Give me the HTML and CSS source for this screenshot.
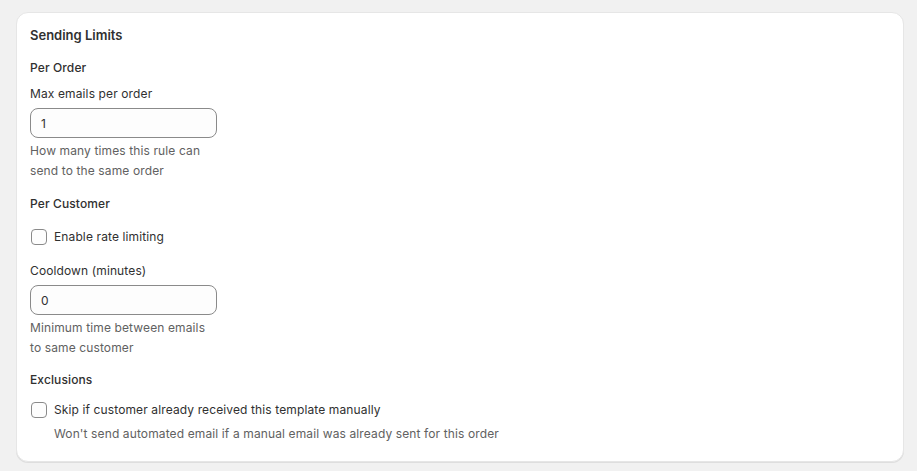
FILE: index.html
```html
<!DOCTYPE html>
<html lang="en">
<head>
  <meta charset="UTF-8">
  <meta name="viewport" content="width=device-width, initial-scale=1.0">
  <title>Sending Limits</title>
  <link rel="stylesheet" href="styles.css">
</head>
<body>

  <div class="card">
    <h2 class="card-title">Sending Limits</h2>

    <!-- Per Order -->
    <div class="section">
      <h3 class="section-title">Per Order</h3>
      <div class="field">
        <label class="field-label" for="maxEmails">Max emails per order</label>
        <input type="text" id="maxEmails" class="text-input" value="1">
        <div class="help-text">How many times this rule can send to the same order</div>
      </div>
    </div>

    <!-- Per Customer -->
    <div class="section">
      <h3 class="section-title">Per Customer</h3>
      <label class="check-row">
        <input type="checkbox" class="checkbox">
        <span>Enable rate limiting</span>
      </label>
      <div class="field field-spaced">
        <label class="field-label" for="cooldown">Cooldown (minutes)</label>
        <input type="text" id="cooldown" class="text-input" value="0">
        <div class="help-text">Minimum time between emails to same customer</div>
      </div>
    </div>

    <!-- Exclusions -->
    <div class="section section-last">
      <h3 class="section-title">Exclusions</h3>
      <label class="check-row check-row-tight">
        <input type="checkbox" class="checkbox">
        <span>Skip if customer already received this template manually</span>
      </label>
      <div class="help-text check-help">Won't send automated email if a manual email was already sent for this order</div>
    </div>
  </div>

</body>
</html>
```

FILE: styles.css
```css
body {
  margin: 0;
  padding: 12px 13px 11px 16px;
  background-color: #f1f1f1;
  font-family: Inter, "Noto Sans", sans-serif;
  font-size: 12px;
  line-height: 20px;
  letter-spacing: 0.12px;
  color: #303030;
}

.card {
  background-color: #fff;
  border: 1px solid #e6e6e6;
  border-radius: 12px;
  box-shadow: 0 1px 0 rgba(0, 0, 0, 0.08);
  padding: 12px 14px 17px 13px;
}

.card-title {
  margin: 0;
  font-size: 13px;
  font-weight: 600;
  line-height: 20px;
  letter-spacing: 0;
}

.section {
  margin-top: 13px;
}

.section-last {
  margin-top: 12px;
}

.section-title {
  margin: 0;
  font-size: 12px;
  font-weight: 500;
  line-height: 20px;
}

.section:first-of-type .section-title {
  margin-top: 1px;
}

.field {
  display: flex;
  flex-direction: column;
  width: 187px;
  margin-top: 6px;
}

.field-spaced {
  margin-top: 14px;
}

.field-label {
  display: block;
}

.text-input {
  box-sizing: border-box;
  height: 30px;
  margin-top: 4px;
  padding: 0 10px;
  font-family: inherit;
  font-size: 12px;
  letter-spacing: inherit;
  color: #303030;
  background-color: #fdfdfd;
  border: 1px solid #8a8a8a;
  border-radius: 8px;
}

.text-input:focus {
  outline: none;
  border-color: #303030;
}

.help-text {
  margin-top: 3px;
  color: #616161;
}

.check-row {
  display: flex;
  align-items: center;
  gap: 7px;
  margin-top: 13px;
  cursor: pointer;
}

.check-row-tight {
  margin-top: 10px;
}

.checkbox {
  appearance: none;
  width: 16px;
  height: 16px;
  margin: 0 0 0 1px;
  border: 1px solid #8a8a8a;
  border-radius: 4px;
  background-color: #fdfdfd;
}

.check-help {
  margin-top: 4px;
  padding-left: 24px;
}
```
